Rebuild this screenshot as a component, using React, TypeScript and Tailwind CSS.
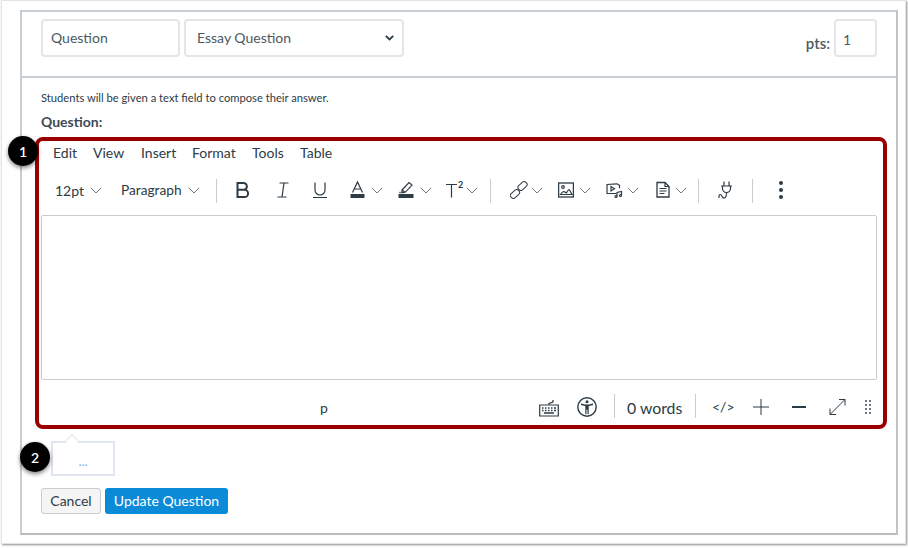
// App.tsx
const ink = '#2d3b45'

function Chevron({ className = '' }: { className?: string }) {
  return (
    <svg className={`w-[12px] h-[7px] shrink-0 ${className}`} viewBox="0 0 12 7" fill="none" stroke="#5f6b75" strokeWidth="0.9">
      <path d="M0.8 0.8 6 6 11.2 0.8" />
    </svg>
  )
}

function Divider({ className = '' }: { className?: string }) {
  return <div className={`w-px h-[24px] bg-[#c7cdd1] shrink-0 ${className}`} />
}

function Icon({ w, h = 20, className = '', children }: { w: number; h?: number; className?: string; children: React.ReactNode }) {
  return (
    <svg className={`shrink-0 ${className}`} width={w} height={h} viewBox={`0 0 ${w} ${h}`} fill="none" stroke={ink} strokeWidth="1.2">
      {children}
    </svg>
  )
}

function EditorToolbar() {
  return (
    <div className="flex items-center h-[24px] mt-[14px] pl-[16px] text-[14px] text-[#2d3b45]">
      <span className="w-[29px]">12pt</span>
      <Chevron className="ml-[6px]" />
      <span className="ml-[19px] w-[61px] text-[13.700px] whitespace-nowrap">Paragraph</span>
      <Chevron className="ml-[6px]" />
      <Divider className="ml-[16px] mt-[2px]" />
      {/* bold */}
      <Icon w={16} className="ml-[18px]">
        <path d="M2.500 3h6a3.400 3.400 0 0 1 0 6.800h-6zM2.500 9.800h7a3.600 3.600 0 0 1 0 7.200h-7z" strokeWidth="2" />
      </Icon>
      {/* italic */}
      <Icon w={14} className="ml-[25px]">
        <path d="M3.500 3h9M1.500 17h9M8 3 6 17" />
      </Icon>
      {/* underline */}
      <Icon w={16} className="ml-[22px]">
        <path d="M3 2.500v7.500a5 5 0 0 0 10 0V2.500M1 17.500h14" />
      </Icon>
      {/* text colour */}
      <Icon w={15} className="ml-[22px]">
        <path d="M2.500 12.500 7.500 2l5 10.500M4.200 9h6.600" />
        <rect x="0.500" y="14" width="14" height="4" fill={ink} stroke="none" />
      </Icon>
      <Chevron className="ml-[6px]" />
      {/* highlight */}
      <Icon w={16} className="ml-[15px]">
        <path d="M4 10 11 2.500l3 2.600-6.800 7.200-3.400.6zM4 10l3.200 2.300M2.500 13 1.500 12" />
        <rect x="0.500" y="14" width="15" height="4" fill={ink} stroke="none" />
      </Icon>
      <Chevron className="ml-[6px]" />
      {/* superscript */}
      <Icon w={20} className="ml-[13px]">
        <path d="M1 4.500h11M6.500 4.500V17.500" />
        <text x="13" y="8" fontSize="9" fontWeight="700" fill={ink} stroke="none" fontFamily="Lato, sans-serif">2</text>
      </Icon>
      <Chevron className="ml-[1px]" />
      <Divider className="ml-[12px] mt-[2px]" />
      {/* link */}
      <Icon w={18} className="ml-[19px]">
        <rect x="-5" y="-2.800" width="10" height="5.600" rx="2.400" transform="translate(5 14) rotate(-42)" strokeWidth="1" />
        <rect x="-5" y="-2.800" width="10" height="5.600" rx="2.400" transform="translate(12.500 6) rotate(-42)" strokeWidth="1" />
      </Icon>
      <Chevron className="ml-[3px]" />
      {/* image */}
      <Icon w={16} className="ml-[15px]">
        <rect x="0.600" y="3" width="14.800" height="14" strokeWidth="1.300" />
        <circle cx="5" cy="7" r="1.300" />
        <path d="M2.500 14.500c2-3 3.500-3.500 5-2s2.500-3.500 3.500-3 2 3.500 3 5z" />
      </Icon>
      <Chevron className="ml-[5px]" />
      {/* media */}
      <Icon w={17} className="ml-[15px]">
        <path d="M10.500 13.500H1V4.500l10-.7 2.500 1.500v3" />
        <path d="M5 6.500v4.500l3.500-2.200z" />
        <path d="M11 16.500v-4l4.500-1v4" />
        <circle cx="10" cy="16.500" r="1" />
        <circle cx="14.500" cy="15.500" r="1" />
      </Icon>
      <Chevron className="ml-[4px]" />
      {/* document */}
      <Icon w={14} className="ml-[17px]">
        <path d="M1 2.500h8l4 4v10.500H1z" strokeWidth="1.300" />
        <path d="M9 2.500v4h4M3.500 8.500h7M3.500 11h7M3.500 13.500h5" />
      </Icon>
      <Chevron className="ml-[5px]" />
      <Divider className="ml-[11px] mt-[2px]" />
      {/* plug */}
      <Icon w={16} className="ml-[19px]">
        <path d="M6 1.500v4.500M11 1.500v4.500M3 6h11M4.500 6v2.500a4 4 0 0 0 8 0V6M8.500 12.500v2" />
        <path d="M8.500 14.500c-.5 3.500-2.500 4.200-3.700 3-1-1-1-3-2.600-3-.8 0-1.200.6-1.200 1.500v2" />
      </Icon>
      <Divider className="ml-[18px] mt-[2px]" />
      {/* more */}
      <div className="ml-[26px] flex flex-col gap-[3.500px]">
        <span className="w-[3.500px] h-[3.500px] rounded-full bg-[#2d3b45]" />
        <span className="w-[3.500px] h-[3.500px] rounded-full bg-[#2d3b45]" />
        <span className="w-[3.500px] h-[3.500px] rounded-full bg-[#2d3b45]" />
      </div>
    </div>
  )
}

function StatusBar() {
  return (
    <div className="flex items-center h-[24px] mt-[15px] text-[#2d3b45]">
      <span className="ml-[281px] mt-[2px] w-[8px] text-[14px] leading-none">p</span>
      {/* keyboard */}
      <Icon w={20} className="ml-[211px] mt-[2px]">
        <path d="M.7 7h18.600v11H.7zM10 7V5.500l4-1.500V2" />
        <path d="M3 10h1.500M6 10h1.500M9 10h1.500M12 10h1.500M15 10h2M3 12.500h1.500M6 12.500h1.500M9 12.500h1.500M12 12.500h1.500M15 12.500h2M5 15h10" strokeWidth="1.300" />
      </Icon>
      {/* accessibility */}
      <Icon w={20} className="ml-[18px]">
        <circle cx="10" cy="10" r="9.200" strokeWidth="1.400" />
        <circle cx="10" cy="4.800" r="1.500" fill={ink} stroke="none" />
        <path d="M4 7.200 8 8.200h4l4-1" strokeWidth="1.400" />
        <path d="M8.300 8.200h3.400v9H10.500v-4.500h-1v4.500H8.300z" fill={ink} stroke="none" />
      </Icon>
      <Divider className="ml-[17px] -mt-[2px]" />
      <span className="ml-[12px] mt-[2px] w-[56px] text-[15.800px] whitespace-nowrap">0 words</span>
      <Divider className="ml-[12px] -mt-[2px]" />
      <span className="ml-[16px] w-[22px] text-[14px] whitespace-nowrap leading-none">&lt;/&gt;</span>
      {/* plus */}
      <Icon w={16} className="ml-[19px]">
        <path d="M8 2v16M0 10h16" strokeWidth="1" />
      </Icon>
      {/* minus */}
      <Icon w={16} className="ml-[22px]">
        <path d="M1 10h14" strokeWidth="2" />
      </Icon>
      {/* fullscreen */}
      <Icon w={17} className="ml-[22px]">
        <path d="M16 2.500 1 17.500M10 2.500h6v6M1 11.500v6h6" strokeWidth="1" />
      </Icon>
      {/* resize grip */}
      <div className="ml-[19px] grid grid-cols-2 gap-x-[2px] gap-y-[2px]">
        {Array.from({ length: 8 }).map((_, i) => (
          <span key={i} className="w-[2px] h-[2px] bg-[#6b7780]" />
        ))}
      </div>
    </div>
  )
}

export default function App() {
  return (
    <div className="relative w-[908px] h-[548px] bg-white overflow-hidden font-['Lato',sans-serif] text-[#2d3b45]">
      <div className="ml-px w-[905px] h-[544px] bg-white border border-[#e4e4e4] shadow-[1px_1px_2px_rgba(0,0,0,0.45)] pl-[18px] pt-[9px]">
        <div className="w-[878px] h-[525px] border-2 border-[#c7cdd1] border-b-[#b8bcbf] border-r-[#c0c4c7]">
          {/* question header */}
          <div className="flex items-start h-[66px] border-b-2 border-[#c7cdd1] pl-[19px] pt-[7px]">
            <div className="w-[139px] h-[38px] border-2 border-[#e3e6e8] rounded-[4px] flex items-center pl-[8px] pb-px text-[14px] text-[#4b5963]">
              Question
            </div>
            <div className="ml-[4px] w-[220px] h-[38px] border-2 border-[#e3e6e8] rounded-[4px] flex items-center justify-between pl-[11px] pr-[8px] pb-px text-[14px] text-[#4b5963]">
              <span>Essay Question</span>
              <svg className="w-[9px] h-[6px]" viewBox="0 0 9 6" fill="none" stroke="#2d3b45" strokeWidth="1.800">
                <path d="M.8.8 4.500 4.500 8.200.8" />
              </svg>
            </div>
            <div className="ml-auto mr-[19px] flex items-start">
              <span className="mt-[15px] text-[15px] font-semibold text-[#4b5963] leading-[18px]">pts:</span>
              <div className="ml-[4px] w-[43px] h-[38px] border-2 border-[#e3e6e8] rounded-[4px] pl-[7px] pt-[10px] text-[14px] leading-[18px] text-[#4b5963]">
                1
              </div>
            </div>
          </div>

          <div className="pl-[19px]">
            <p className="mt-[13px] text-[11.200px] leading-[14px]">Students will be given a text field to compose their answer.</p>
            <p className="mt-[9px] text-[14px] font-bold leading-[16px] text-[#3d4a54]">Question:</p>

            {/* highlighted editor */}
            <div className="-ml-[6px] mt-[7px] w-[852px] h-[292px] border-[4px] border-[#9b0000] rounded-[8px]">
              <div className="flex h-[23px] pt-[3px] pl-[14px] text-[14px] leading-[18px] text-[#2d3b45]">
                <span className="w-[40px]">Edit</span>
                <span className="w-[48px]">View</span>
                <span className="w-[51px]">Insert</span>
                <span className="w-[60px]">Format</span>
                <span className="w-[48px]">Tools</span>
                <span>Table</span>
              </div>
              <EditorToolbar />
              <div className="ml-[2px] mt-[13px] w-[836px] h-[165px] border border-[#c7cdd1] rounded-[2px] bg-white" />
              <StatusBar />
            </div>

            {/* empty speech bubble */}
            <div className="relative ml-[10px] mt-[12px] w-[64px] h-[35px] border-2 border-[#dfe6f2] flex items-center justify-center text-[13px] leading-none text-[#7db1e3]">
              <span className="mt-[6px]">...</span>
              <span className="absolute -top-[7px] left-[14px] w-[10px] h-[10px] rotate-45 bg-white border-l border-t border-[#e2e4e6]" />
            </div>

            <div className="flex mt-[12px]">
              <div className="w-[60px] h-[26px] bg-[#f5f5f5] border border-[#c7cdd1] rounded-[3px] flex items-center justify-center pb-px text-[14px] text-[#2d3b45]">
                Cancel
              </div>
              <div className="ml-[4px] w-[123px] h-[26px] bg-[#0b8ad8] rounded-[3px] flex items-center justify-center pb-px text-[14px] text-white">
                Update Question
              </div>
            </div>
          </div>
        </div>
      </div>

      {/* step badges */}
      <div className="absolute left-[8px] top-[136px] w-[30px] h-[30px] rounded-full bg-black text-white text-[14px] font-semibold flex items-center justify-center shadow-[0_2px_4px_rgba(0,0,0,0.5)]">
        1
      </div>
      <div className="absolute left-[20px] top-[442px] w-[30px] h-[30px] rounded-full bg-black text-white text-[14px] font-semibold flex items-center justify-center shadow-[0_2px_4px_rgba(0,0,0,0.5)]">
        2
      </div>
    </div>
  )
}
